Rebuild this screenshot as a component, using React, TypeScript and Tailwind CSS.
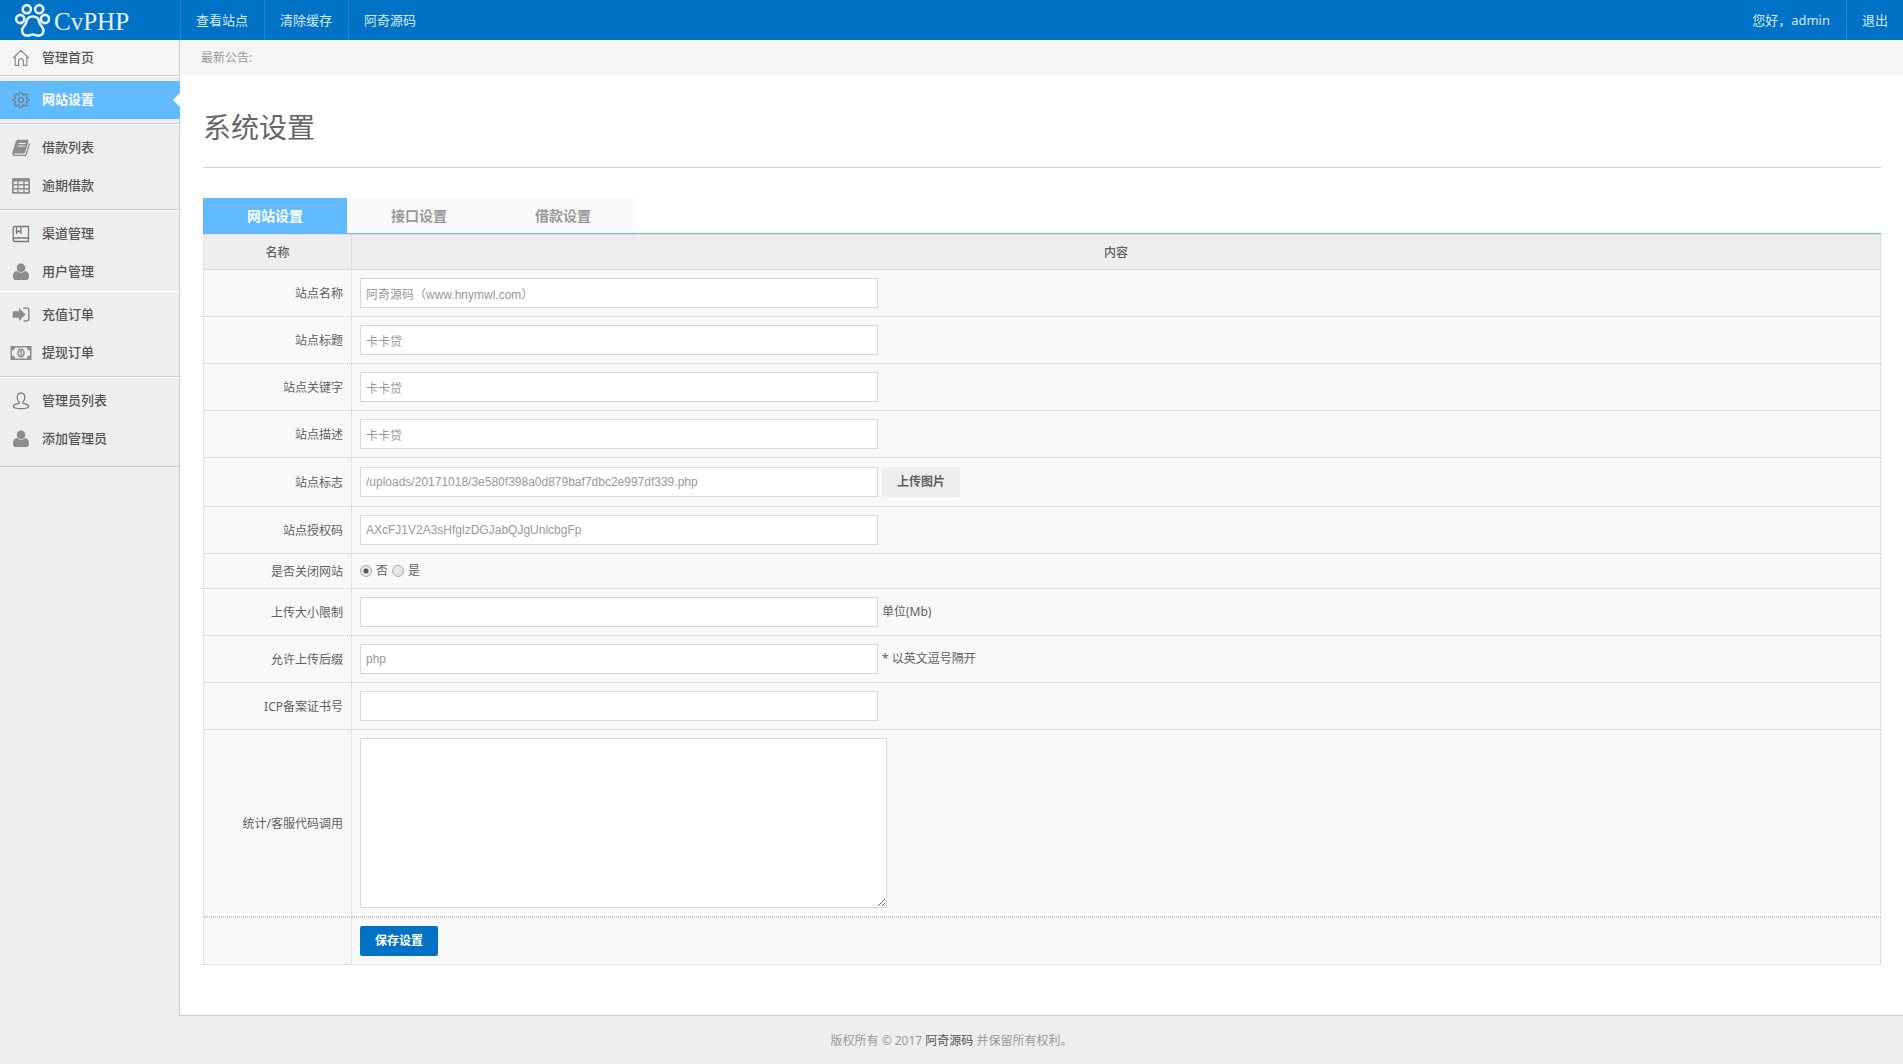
import { useState, type ReactNode } from 'react'
import clsx from 'clsx'

type IconProps = { children: ReactNode }

function Icon({ children }: IconProps) {
    return (
        <svg viewBox="0 0 22 18" className="h-[18px] w-[22px] shrink-0" fill="none" stroke="currentColor" aria-hidden="true">
            {children}
        </svg>
    )
}

const HomeIcon = () => (
    <Icon>
        <path d="M3 9.200 11 1.300l8 7.900M5.200 7.500v8.800h3.400V12a2.400 2.400 0 0 1 4.800 0v4.300h3.400V7.500" strokeWidth="1.200" />
    </Icon>
)

const GearIcon = () => (
    <Icon>
        <circle cx="11" cy="9" r="2.500" strokeWidth="1.100" />
        <path
            d="M9.700 1.500h2.600l.5 2.300 1 .4 2-1.300 1.800 1.900-1.300 2 .4 1 2.300.5v1.400l-2.300.5-.4 1 1.300 2-1.800 1.900-2-1.300-1 .4-.5 2.300H9.700l-.5-2.300-1-.4-2 1.300-1.800-1.900 1.300-2-.4-1L3 9.700V8.300l2.300-.5.4-1-1.300-2 1.800-1.900 2 1.300 1-.4z"
            strokeWidth="1.100"
            strokeLinejoin="round"
        />
    </Icon>
)

const BookIcon = () => (
    <Icon>
        <path
            d="M8 .8h9.200c1 0 1.500.8 1.200 1.700l-3.300 10.700c-.3.900-.9 1.300-1.900 1.300H4.800c-.8 0-.9 1 .1 1.300h9.300c.8 0 1.300-.4 1.500-1.100L19 4c.8.3 1 .9.8 1.700l-3 9.700c-.3.900-1.100 1.500-2.100 1.500H4.600c-1.700 0-2.800-1.700-2.200-3.200L5.600 2.800C6 1.500 6.800.8 8 .8Z"
            fill="currentColor"
            stroke="none"
        />
        <path d="M8.600 4.500h7M7.900 7h7" className="stroke-[#eee]" strokeWidth="1.200" />
    </Icon>
)

const TableIcon = () => (
    <Icon>
        <rect x="2" y="1" width="18" height="15.500" rx="1.500" fill="currentColor" stroke="none" />
        <path d="M3.500 5.800h15M3.500 9.800h15M3.500 13.800h15" className="stroke-[#eee]" strokeWidth="2.600" />
        <path d="M8 4v12M14 4v12" strokeWidth="1.400" />
        <path d="M2.700 4v11.800h16.600V4" strokeWidth="1.400" />
    </Icon>
)

const ChannelIcon = () => (
    <Icon>
        <path
            d="M5 1.500h13.500v15H5.200c-1.200 0-2-.7-2-1.700V3.200c0-1 .7-1.700 1.800-1.700ZM3.300 14.500c.2-1 .9-1.500 1.900-1.500h13.300M6.500 1.500V8l2.200-2.200L10.900 8V1.500"
            className="stroke-[#777]"
            strokeWidth="1.300"
        />
    </Icon>
)

const UserIcon = () => (
    <Icon>
        <path
            d="M11 .5a4.300 4.300 0 0 1 4.300 4.300A4.300 4.300 0 0 1 11 9a4.300 4.300 0 0 1-4.300-4.200A4.300 4.300 0 0 1 11 .5ZM6.800 8C4.200 8.200 3 10.500 3 13.700c0 2 1 3.300 2.800 3.300h10.400c1.800 0 2.800-1.300 2.800-3.300 0-3.200-1.200-5.500-3.800-5.700A6 6 0 0 1 11 9.700 6 6 0 0 1 6.800 8Z"
            fill="currentColor"
            stroke="none"
        />
    </Icon>
)

const SignInIcon = () => (
    <Icon>
        <path d="M9 2 15.500 8.500 9 15v-3.300H3.300c-.4 0-.6-.2-.6-.6V5.900c0-.4.2-.6.600-.6H9z" fill="currentColor" stroke="none" />
        <path d="M13.500 2h3c1.400 0 2.300.9 2.300 2.300v8.400c0 1.400-.9 2.300-2.300 2.300h-3" strokeWidth="1.500" />
    </Icon>
)

const MoneyIcon = () => (
    <Icon>
        <path
            d="M.5 2h21v14H.5zM5 3.400A3 3 0 0 1 2 6.400v5.200a3 3 0 0 1 3 3h12a3 3 0 0 1 3-3V6.400a3 3 0 0 1-3-3z"
            fill="currentColor"
            fillRule="evenodd"
            stroke="none"
        />
        <ellipse cx="11" cy="9" rx="3" ry="3.800" strokeWidth="1.500" />
        <path d="m9.900 7.800 1.300-.8v4M9.800 11h2.600" strokeWidth="1.200" />
    </Icon>
)

const AdminIcon = () => (
    <Icon>
        <path
            d="M11 1.200c2.300 0 3.800 1.700 3.800 4 0 2-.6 3.800-1.800 4.900v1.200c3.200.4 5.700 1.700 5.700 3.200 0 1.400-2.500 2.200-7.700 2.200s-7.700-.8-7.700-2.200c0-1.500 2.500-2.800 5.700-3.200v-1.200C7.800 9 7.200 7.200 7.200 5.200c0-2.300 1.500-4 3.800-4Z"
            className="stroke-[#777]"
            strokeWidth="1.200"
        />
    </Icon>
)

const menuGroups = [
    {
        box: 'border-b border-b-[#ccc] bg-[#f5f5f5]',
        row: 'h-[35px]',
        items: [{ label: '管理首页', icon: HomeIcon }],
    },
    {
        box: 'border-y border-t-white border-b-[#ccc] py-1',
        row: 'h-[38px]',
        items: [{ label: '网站设置', icon: GearIcon, active: true }],
    },
    {
        box: 'border-y border-t-white border-b-[#ccc] py-1',
        row: 'h-[38px]',
        items: [
            { label: '借款列表', icon: BookIcon },
            { label: '逾期借款', icon: TableIcon },
        ],
    },
    {
        box: 'border-t border-t-white pt-1',
        row: 'h-[38px]',
        items: [
            { label: '渠道管理', icon: ChannelIcon },
            { label: '用户管理', icon: UserIcon },
        ],
    },
    {
        box: 'border-y border-t-white border-b-[#ccc] py-1',
        row: 'h-[38px]',
        items: [
            { label: '充值订单', icon: SignInIcon },
            { label: '提现订单', icon: MoneyIcon },
        ],
    },
    {
        box: 'border-y border-t-white border-b-[#ccc] pt-1 pb-2',
        row: 'h-[38px]',
        items: [
            { label: '管理员列表', icon: AdminIcon },
            { label: '添加管理员', icon: UserIcon },
        ],
    },
]

const tabs = ['网站设置', '接口设置', '借款设置']

const cell = 'border-r border-b border-dotted border-[#ccc] px-2'
const inputStyle =
    "block h-[30px] w-[518px] max-w-full border border-[#d9d9d9] bg-white px-[5px] font-['Liberation_Sans','Noto_Sans_CJK_SC',sans-serif] text-xs text-[#999] outline-none focus:border-[#62baff]"
const radioStyle =
    'size-3 appearance-none rounded-full border border-[#aaa] bg-linear-to-b from-[#eee] to-[#ddd] checked:bg-[radial-gradient(circle,#555_2px,#e6e6e6_3px)]'

function Logo() {
    return (
        <a href="#" aria-label="CvPHP" className="flex h-10 w-[180px] shrink-0 items-center gap-1 pl-[14px] text-[#e8f1f9]">
            <svg viewBox="0 0 36 36" className="size-9 shrink-0" fill="none" stroke="currentColor" strokeWidth="2.600" aria-hidden="true">
                <circle cx="12.800" cy="7.200" r="4.100" />
                <circle cx="25.200" cy="7.200" r="4.100" />
                <circle cx="6.200" cy="17" r="4.100" />
                <circle cx="31" cy="17" r="4.100" />
                <path d="M18.800 14.500c3.500 0 6 2.300 6.400 5.500.3 2.200 1.400 3 2.900 4.800 2.200 2.700 1.800 7.200-1.700 8.600-2.800 1-4.600-.9-7.600-.9s-4.800 1.900-7.600.9c-3.500-1.400-3.900-5.900-1.700-8.600 1.500-1.800 2.600-2.600 2.900-4.800.4-3.200 2.900-5.500 6.400-5.500Z" />
            </svg>
            <span className="pt-1 font-['Liberation_Serif',serif] text-[25px] leading-9">CvPHP</span>
        </a>
    )
}

function Header() {
    return (
        <header className="flex h-10 bg-[#0072c6] text-[13px] leading-10 text-[#d9e8f5]">
            <Logo />
            <nav className="flex flex-1">
                {['查看站点', '清除缓存', '阿奇源码'].map((label) => (
                    <a key={label} href="#" className="w-[84px] border-l border-[#0f86e0] pl-[15px] hover:bg-[#0064b0]">
                        {label}
                    </a>
                ))}
            </nav>
            <span className="pr-4">您好，admin</span>
            <a href="#" className="border-l border-[#0f86e0] px-[15px] hover:bg-[#0064b0]">
                退出
            </a>
        </header>
    )
}

function Sidebar() {
    return (
        <aside className="w-[180px] shrink-0 border-r border-[#ccc]">
            {menuGroups.map((group) => (
                <ul key={group.items[0].label} className={group.box}>
                    {group.items.map(({ label, icon: ItemIcon, ...item }) => {
                        const active = 'active' in item
                        return (
                            <li key={label} className="relative">
                                <a
                                    href="#"
                                    className={clsx(
                                        'flex items-center gap-[10px] pl-[10px] text-[13px]',
                                        group.row,
                                        active ? '-mr-px bg-[#62baff] font-bold text-white' : 'font-medium text-[#555]'
                                    )}
                                >
                                    <span className={active ? 'text-[#777]' : 'text-[#8c8c8c]'}>
                                        <ItemIcon />
                                    </span>
                                    {label}
                                </a>
                                {active && (
                                    <span className="absolute top-3 -right-px border-y-[7px] border-r-[7px] border-y-transparent border-r-white" />
                                )}
                            </li>
                        )
                    })}
                </ul>
            ))}
        </aside>
    )
}

type FieldProps = {
    id: string
    label: string
    value?: string
    hint?: string
    children?: ReactNode
}

function Field({ id, label, value = '', hint, children }: FieldProps) {
    return (
        <tr>
            <th scope="row" className={clsx(cell, 'pt-px text-right font-normal')}>
                <label htmlFor={id}>{label}</label>
            </th>
            <td className={clsx(cell, 'py-2')}>
                {children ?? (
                    <div className="flex items-center gap-1">
                        <input id={id} type="text" defaultValue={value} className={inputStyle} />
                        {hint && <span>{hint}</span>}
                    </div>
                )}
            </td>
        </tr>
    )
}

function SettingsForm() {
    const [closed, setClosed] = useState(false)

    return (
        <form onSubmit={(e) => e.preventDefault()}>
            <table className="w-full border-separate border-spacing-0 border-t border-l border-dotted border-[#ccc] bg-[#f9f9f9] text-xs leading-[18px] text-[#606060]">
                <thead className="bg-[#eee]">
                    <tr>
                        <th className={clsx(cell, 'w-[148px] pt-[9px] pb-[7px] font-medium')}>名称</th>
                        <th className={clsx(cell, 'pt-[9px] pb-[7px] font-medium')}>内容</th>
                    </tr>
                </thead>
                <tbody>
                    <Field id="name" label="站点名称" value="阿奇源码（www.hnymwl.com）" />
                    <Field id="title" label="站点标题" value="卡卡贷" />
                    <Field id="keywords" label="站点关键字" value="卡卡贷" />
                    <Field id="description" label="站点描述" value="卡卡贷" />
                    <Field id="logo" label="站点标志">
                        <div className="flex h-8 items-center gap-1">
                            <input
                                id="logo"
                                type="text"
                                defaultValue="/uploads/20171018/3e580f398a0d879baf7dbc2e997df339.php"
                                className={inputStyle}
                            />
                            <button type="button" className="h-[30px] w-[78px] cursor-pointer rounded-xs bg-[#eee] font-bold">
                                上传图片
                            </button>
                        </div>
                    </Field>
                    <Field id="license" label="站点授权码" value="AXcFJ1V2A3sHfglzDGJabQJgUnlcbgFp" />
                    <Field id="closed-no" label="是否关闭网站">
                        <div className="flex items-center gap-1">
                            <input
                                id="closed-no"
                                type="radio"
                                name="closed"
                                checked={!closed}
                                onChange={() => setClosed(false)}
                                className={radioStyle}
                            />
                            <label htmlFor="closed-no">否</label>
                            <input
                                id="closed-yes"
                                type="radio"
                                name="closed"
                                checked={closed}
                                onChange={() => setClosed(true)}
                                className={radioStyle}
                            />
                            <label htmlFor="closed-yes">是</label>
                        </div>
                    </Field>
                    <Field id="upload-size" label="上传大小限制" hint="单位(Mb)" />
                    <Field id="upload-ext" label="允许上传后缀" value="php" hint="* 以英文逗号隔开" />
                    <Field id="icp" label="ICP备案证书号" />
                    <Field id="code" label="统计/客服代码调用">
                        <textarea
                            id="code"
                            className="block h-[170px] w-[527px] max-w-full resize border border-[#d9d9d9] bg-white p-[5px] text-[#999] outline-none focus:border-[#62baff]"
                        />
                    </Field>
                </tbody>
                <tfoot>
                    <tr>
                        <td className={clsx(cell, 'border-t')} />
                        <td className={clsx(cell, 'border-t py-2')}>
                            <button
                                type="submit"
                                className="block h-[30px] w-[78px] cursor-pointer rounded-xs bg-[#0072c6] font-bold text-white hover:bg-[#0064b0]"
                            >
                                保存设置
                            </button>
                        </td>
                    </tr>
                </tfoot>
            </table>
        </form>
    )
}

export default function App() {
    const [tab, setTab] = useState(tabs[0])

    return (
        <div className="flex min-h-screen flex-col bg-[#eee] font-['Noto_Sans','Noto_Sans_CJK_SC',sans-serif] text-xs text-[#555]">
            <Header />
            <div className="flex">
                <Sidebar />
                <main className="min-w-0 flex-1 border-b border-[#ccc] bg-white pb-[50px]">
                    <p className="ml-px bg-[#f5f5f5] pl-5 leading-[35px] text-[#999]">最新公告:</p>
                    <div className="pr-[22px] pl-[23px]">
                        <h1 className="border-b border-[#d5d5d5] pt-8 pb-5 text-[28px] leading-10 text-[#666]">系统设置</h1>
                        <div className="mt-[30px] flex border-b border-[#62baff]">
                            {tabs.map((name) => (
                                <button
                                    key={name}
                                    type="button"
                                    onClick={() => setTab(name)}
                                    className={clsx(
                                        'h-[35px] w-36 cursor-pointer text-sm font-bold',
                                        tab === name ? 'bg-[#62baff] text-white' : 'bg-[#f9f9f9] text-[#999]'
                                    )}
                                >
                                    {name}
                                </button>
                            ))}
                        </div>
                        <SettingsForm />
                    </div>
                </main>
            </div>
            <footer className="pt-[15px] pb-3 text-center leading-5 text-[#999]">
                版权所有 © 2017{' '}
                <a href="#" className="text-[#555]">
                    阿奇源码
                </a>{' '}
                并保留所有权利。
            </footer>
        </div>
    )
}
